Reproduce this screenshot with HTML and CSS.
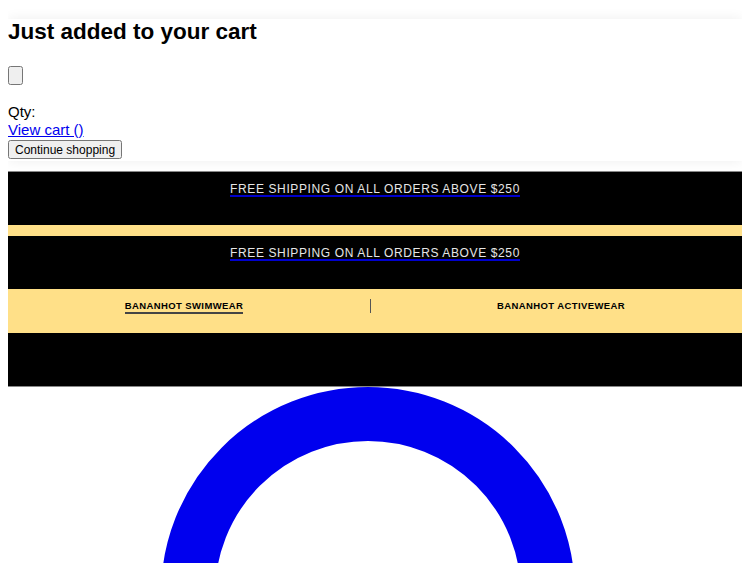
FILE: index.html
```html
<!DOCTYPE html>
<html lang="en">
<head>
  <meta charset="UTF-8" />
  <meta name="viewport" content="width=device-width, initial-scale=1.0"/>
  <title>Bananhot</title>
  <link rel="stylesheet" href="styles.css">
</head>
<body>
  <div class="cart-popup">
    <h2>Just added to your cart</h2>
    <button class="close-btn"></button>
    <div class="cart-info">
      <div>Qty:</div>
      <a href="#">View cart ()</a>
      <button class="continue-btn">Continue shopping</button>
    </div>
  </div>

  <header class="site-header">
    <div class="announce">
      <a href="#"><span>FREE SHIPPING ON ALL ORDERS ABOVE $250</span></a>
    </div>
    <div class="strip"></div>
    <div class="announce">
      <a href="#"><span>FREE SHIPPING ON ALL ORDERS ABOVE $250</span></a>
    </div>
    <nav class="brand-nav">
      <div class="brand-item"><a href="#" class="active">BANANHOT SWIMWEAR</a></div>
      <div class="divider-cell"><span class="divider"></span></div>
      <div class="brand-item"><a href="#">BANANHOT ACTIVEWEAR</a></div>
    </nav>
    <div class="main-bar"></div>
  </header>

  <svg class="spinner" width="416" height="180" viewBox="0 0 416 180">
    <circle cx="208" cy="208" r="180" fill="none" stroke="#0000ee" stroke-width="54"/>
  </svg>
</body>
</html>
```

FILE: styles.css
```css
body {
  margin: 8px;
  font-family: "Liberation Sans", Arial, sans-serif;
  font-size: 15px;
  color: #000;
  background: #fff;
}

.cart-popup {
  margin: 11px 0 11px;
  padding-bottom: 2px;
  background: #fff;
  box-shadow: 0 0 12px rgba(0, 0, 0, 0.07);
}

.cart-popup h2 {
  margin: 0 0 21px;
  font-size: 22.5px;
  line-height: 26px;
}

.close-btn {
  display: block;
  width: 15px;
  height: 19px;
  padding: 0;
}

.cart-info {
  margin-top: 18px;
  line-height: 18px;
}

.cart-info a {
  color: #0000ee;
}

.continue-btn {
  display: block;
  margin-top: 1px;
  height: 19px;
  padding: 0 5px;
  font-family: "Liberation Sans", Arial, sans-serif;
  font-size: 12px;
}

.site-header {
  box-shadow: 0 0 0 1px #888;
}

.announce {
  background: #000;
  height: 53px;
  padding-top: 10px;
  box-sizing: border-box;
  text-align: center;
  font-size: 12px;
  line-height: 14px;
  letter-spacing: 0.62px;
}

.announce a {
  display: inline-block;
  color: #e6e6e6;
  text-decoration: none;
  border-bottom: 2px solid #0000cc;
  line-height: 12px;
}

.strip {
  height: 11px;
  background: #ffe088;
}

.brand-nav {
  display: grid;
  grid-template-columns: 352px 20px 1fr;
  height: 44px;
  padding-top: 11px;
  box-sizing: border-box;
  background: #ffe088;
}

.brand-item {
  text-align: center;
  font-size: 9.5px;
  line-height: 12px;
  font-weight: bold;
  letter-spacing: 0.4px;
}

.brand-item a {
  color: #000;
  text-decoration: none;
}

.brand-item a.active {
  border-bottom: 2px solid #444;
  padding-bottom: 1px;
}

.divider-cell {
  display: flex;
  justify-content: center;
}

.divider {
  width: 1px;
  height: 14px;
  margin-top: -1px;
  background: #555;
}

.main-bar {
  height: 53px;
  background: #000;
}

.spinner {
  display: block;
  margin-left: 152px;
}
```
